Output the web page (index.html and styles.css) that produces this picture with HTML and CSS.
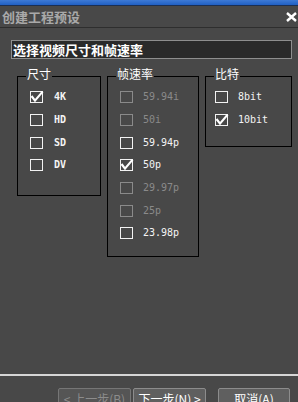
FILE: index.html
```html
<!DOCTYPE html>
<html lang="zh-CN">
<head>
<meta charset="utf-8">
<title>创建工程预设</title>
<link rel="stylesheet" href="styles.css">
</head>
<body>
<div class="window">
  <div class="topstrip"></div>
  <div class="titlebar">
    <span class="title">创建工程预设</span>
    <svg class="close" width="11" height="10" viewBox="0 0 11 10"><path d="M1 1 L10 9 M10 1 L1 9" stroke="#fff" stroke-width="2.4" fill="none"/></svg>
  </div>
  <div class="main">
    <div class="subtitle">选择视频尺寸和帧速率</div>
    <div class="groups">
      <fieldset class="group group-size">
        <legend>尺寸</legend>
        <div class="rows">
          <div class="row"><svg class="cb" width="13" height="12" viewBox="0 0 13 12"><rect x="0.5" y="0.5" width="12" height="11" fill="none" stroke="#f2f2f2"/><path d="M1.5 5 L5 9.6 L12.6 0.6" fill="none" stroke="#fff" stroke-width="2.2"/></svg><span class="label bold">4K</span></div>
          <div class="row"><svg class="cb" width="13" height="12" viewBox="0 0 13 12"><rect x="0.5" y="0.5" width="12" height="11" fill="none" stroke="#f2f2f2"/></svg><span class="label bold">HD</span></div>
          <div class="row"><svg class="cb" width="13" height="12" viewBox="0 0 13 12"><rect x="0.5" y="0.5" width="12" height="11" fill="none" stroke="#f2f2f2"/></svg><span class="label bold">SD</span></div>
          <div class="row"><svg class="cb" width="13" height="12" viewBox="0 0 13 12"><rect x="0.5" y="0.5" width="12" height="11" fill="none" stroke="#f2f2f2"/></svg><span class="label bold">DV</span></div>
        </div>
      </fieldset>
      <fieldset class="group group-rate">
        <legend>帧速率</legend>
        <div class="rows">
          <div class="row disabled"><svg class="cb" width="13" height="12" viewBox="0 0 13 12"><rect x="0.5" y="0.5" width="12" height="11" fill="none" stroke="#8a8a8a"/></svg><span class="label">59.94i</span></div>
          <div class="row disabled"><svg class="cb" width="13" height="12" viewBox="0 0 13 12"><rect x="0.5" y="0.5" width="12" height="11" fill="none" stroke="#8a8a8a"/></svg><span class="label">50i</span></div>
          <div class="row"><svg class="cb" width="13" height="12" viewBox="0 0 13 12"><rect x="0.5" y="0.5" width="12" height="11" fill="none" stroke="#f2f2f2"/></svg><span class="label">59.94p</span></div>
          <div class="row"><svg class="cb" width="13" height="12" viewBox="0 0 13 12"><rect x="0.5" y="0.5" width="12" height="11" fill="none" stroke="#f2f2f2"/><path d="M1.5 5 L5 9.6 L12.6 0.6" fill="none" stroke="#fff" stroke-width="2.2"/></svg><span class="label">50p</span></div>
          <div class="row disabled"><svg class="cb" width="13" height="12" viewBox="0 0 13 12"><rect x="0.5" y="0.5" width="12" height="11" fill="none" stroke="#8a8a8a"/></svg><span class="label">29.97p</span></div>
          <div class="row disabled"><svg class="cb" width="13" height="12" viewBox="0 0 13 12"><rect x="0.5" y="0.5" width="12" height="11" fill="none" stroke="#8a8a8a"/></svg><span class="label">25p</span></div>
          <div class="row"><svg class="cb" width="13" height="12" viewBox="0 0 13 12"><rect x="0.5" y="0.5" width="12" height="11" fill="none" stroke="#f2f2f2"/></svg><span class="label">23.98p</span></div>
        </div>
      </fieldset>
      <fieldset class="group group-bit">
        <legend>比特</legend>
        <div class="rows">
          <div class="row"><svg class="cb" width="13" height="12" viewBox="0 0 13 12"><rect x="0.5" y="0.5" width="12" height="11" fill="none" stroke="#f2f2f2"/></svg><span class="label">8bit</span></div>
          <div class="row"><svg class="cb" width="13" height="12" viewBox="0 0 13 12"><rect x="0.5" y="0.5" width="12" height="11" fill="none" stroke="#f2f2f2"/><path d="M1.5 5 L5 9.6 L12.6 0.6" fill="none" stroke="#fff" stroke-width="2.2"/></svg><span class="label">10bit</span></div>
        </div>
      </fieldset>
    </div>
  </div>
  <div class="footer">
    <div class="separator"></div>
    <div class="buttons">
      <button class="btn btn-disabled">&lt; 上一步(B)</button>
      <button class="btn btn-next">下一步(N) &gt;</button>
      <button class="btn btn-cancel">取消(A)</button>
    </div>
  </div>
</div>
</body>
</html>
```

FILE: styles.css
```css
html, body {
  margin: 0;
  padding: 0;
}
body {
  width: 298px;
  height: 402px;
  overflow: hidden;
  background: #484848;
  font-family: "Noto Sans CJK SC", sans-serif;
  color: #fff;
}
.window {
  display: flex;
  flex-direction: column;
  height: 402px;
}
.topstrip {
  height: 5px;
  background: linear-gradient(#3d7ad6, #2060c4);
  border-bottom: 1px solid #1b2f52;
}
.titlebar {
  height: 22px;
  display: flex;
  align-items: center;
  justify-content: space-between;
  padding: 1px 1px 0 2px;
  box-sizing: border-box;
  border-bottom: 1px solid #2e2e2e;
}
.title {
  font-size: 13px;
  line-height: 14px;
  color: #a9a9a9;
  font-weight: 700;
}
.close {
  display: block;
}
.main {
  flex: 1;
  padding-top: 12px;
}
.subtitle {
  margin: 0 6px 0 11px;
  height: 19px;
  box-sizing: border-box;
  border: 1px solid #8e8e8e;
  background: #2a2a2a;
  color: #fff;
  font-weight: 700;
  font-size: 13px;
  line-height: 17px;
  padding-left: 1px;
}
.groups {
  display: flex;
  align-items: flex-start;
  gap: 6px;
  margin: 9px 0 0 17px;
}
.group {
  margin: 0;
  padding: 0;
  border: 1px solid #000;
  min-width: 0;
  box-sizing: border-box;
}
.group legend {
  padding: 0 1px 4px;
  margin-left: 8px;
  font-size: 12px;
  line-height: 12px;
  color: #fff;
}
.group-size { width: 84px; height: 128px; }
.group-rate { width: 92px; height: 189px; }
.group-bit { width: 87px; height: 79px; }
.rows {
  padding-top: 2px;
  padding-left: 12px;
}
.group-bit .rows {
  padding-left: 9px;
}
.row {
  height: 22.67px;
  display: flex;
  align-items: center;
  gap: 10px;
}
.cb {
  display: block;
  overflow: visible;
  flex: none;
}
.label {
  font-family: "DejaVu Sans Mono", monospace;
  font-size: 10px;
  line-height: 12px;
  color: #f4f4f4;
}
.label.bold {
  font-weight: 700;
  margin-left: 1px;
}
.row.disabled .label {
  color: #8a8a8a;
}
.footer {
  height: 28px;
  overflow: hidden;
}
.separator {
  height: 2px;
  background: #d6d6d6;
}
.buttons {
  display: flex;
  justify-content: flex-end;
  padding: 12px 8px 0 0;
}
.btn {
  height: 22px;
  box-sizing: border-box;
  border: 1px solid #8c8c8c;
  border-radius: 2px;
  background: #5f5f5f;
  color: #fff;
  font-family: "Noto Sans CJK SC", sans-serif;
  font-size: 12px;
  line-height: 18px;
  padding: 0;
  flex: none;
}
.btn-disabled {
  width: 73px;
  background: #555;
  border-color: #767676;
  color: #8c8c8c;
}
.btn-next {
  width: 73px;
  margin-left: 2px;
}
.btn-cancel {
  width: 72px;
  margin-left: 12px;
}
```
